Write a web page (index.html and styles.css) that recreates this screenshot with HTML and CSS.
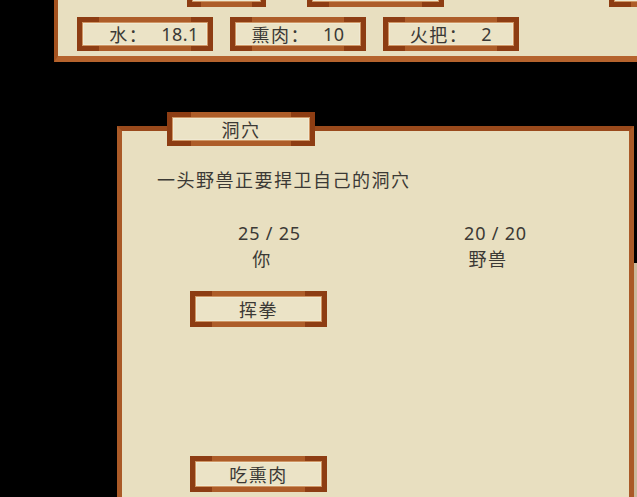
FILE: index.html
```html
<!DOCTYPE html>
<html lang="zh">
<head>
    <meta charset="UTF-8">
    <meta name="viewport" content="width=device-width, initial-scale=1.0">
    <title>洞穴</title>
    <link rel="stylesheet" href="styles.css">
</head>
<body>
    <!-- Stores bar -->
    <div class="top-panel">
        <div class="top-row">
            <div class="frame top-btn short"></div>
            <div class="frame top-btn"></div>
            <div class="frame top-btn far"></div>
        </div>
        <div class="stores">
            <div class="frame store water"><span>水：</span><span class="store-val">18.1</span></div>
            <div class="frame store"><span>熏肉：</span><span class="store-val">10</span></div>
            <div class="frame store"><span>火把：</span><span class="store-val">2</span></div>
        </div>
    </div>

    <!-- Encounter -->
    <div class="scene">
        <div class="cave-panel">
            <div class="frame tab">洞穴</div>
            <p class="desc">一头野兽正要捍卫自己的洞穴</p>
            <div class="fighters">
                <div class="fighter">
                    <div class="hp">25 / 25</div>
                    <div class="name">你</div>
                </div>
                <div class="fighter">
                    <div class="hp">20 / 20</div>
                    <div class="name">野兽</div>
                </div>
            </div>
            <div class="frame action">挥拳</div>
            <div class="frame action eat">吃熏肉</div>
        </div>
        <div class="side-panel"></div>
    </div>
</body>
</html>
```

FILE: styles.css
```css
/* General */
body {
    margin: 0;
    height: 497px;
    overflow: hidden;
    background: #000;
    color: #3b3935;
    font-family: "Noto Sans", "Noto Sans CJK SC", sans-serif;
    font-size: 18px;
    letter-spacing: 1.5px;
}

/* Pixel frame used by buttons, tabs and store boxes */
.frame {
    box-sizing: border-box;
    flex-shrink: 0;
    display: flex;
    align-items: center;
    justify-content: center;
    background: #ebe3c6;
    border: 5px solid #a5531e;
    border-image: linear-gradient(90deg, #8d3d13 0 14%, #ad5d29 14% 86%, #8d3d13 86%) 1;
    box-shadow: inset 0 0 0 1px #cf9664, inset 0 0 0 2px #f0e9d2;
}

/* Top panel */
.top-panel {
    margin: -28px -60px 0 54px;
    padding-bottom: 5px;
    background: #e8dfc0;
    border-left: 4px solid #a4521f;
    border-bottom: 6px solid #b5632d;
}

.top-row {
    display: flex;
    padding-left: 129px;
}

.top-btn {
    width: 137px;
    height: 35px;
    margin-left: 41px;
}

.top-btn.short {
    width: 79px;
    margin-left: 0;
}

.top-btn.far {
    margin-left: 165px;
}

.stores {
    display: flex;
    gap: 17px;
    margin-top: 10px;
    padding-left: 19px;
}

.store {
    width: 136px;
    height: 34px;
    gap: 13px;
}

.store.water {
    padding-left: 18px;
}

.store-val {
    letter-spacing: 0.5px;
}

/* Cave panel */
.scene {
    display: flex;
    align-items: flex-start;
    margin-top: 64px;
}

.cave-panel {
    position: relative;
    flex-shrink: 0;
    box-sizing: border-box;
    width: 517px;
    height: 400px;
    margin-left: 117px;
    background: #e8dfc0;
    border: 5px solid #aa5a27;
    border-top-color: #9a4a1c;
}

.tab {
    position: absolute;
    left: 45px;
    top: -19px;
    width: 148px;
    height: 34px;
}

.desc {
    margin: 37px 0 0 35px;
    line-height: 24px;
}

.fighters {
    display: grid;
    grid-template-columns: 226px 226px;
    margin: 28px 0 0 27px;
    text-align: center;
    line-height: 26px;
}

.hp {
    padding-left: 15px;
    letter-spacing: 0.8px;
}

.action {
    width: 137px;
    height: 36px;
    margin: 19px 0 0 68px;
}

.action.eat {
    margin-top: 129px;
}

.side-panel {
    flex-shrink: 0;
    width: 10px;
    height: 300px;
    margin-top: 137px;
    background: #cbb99c;
}
```
